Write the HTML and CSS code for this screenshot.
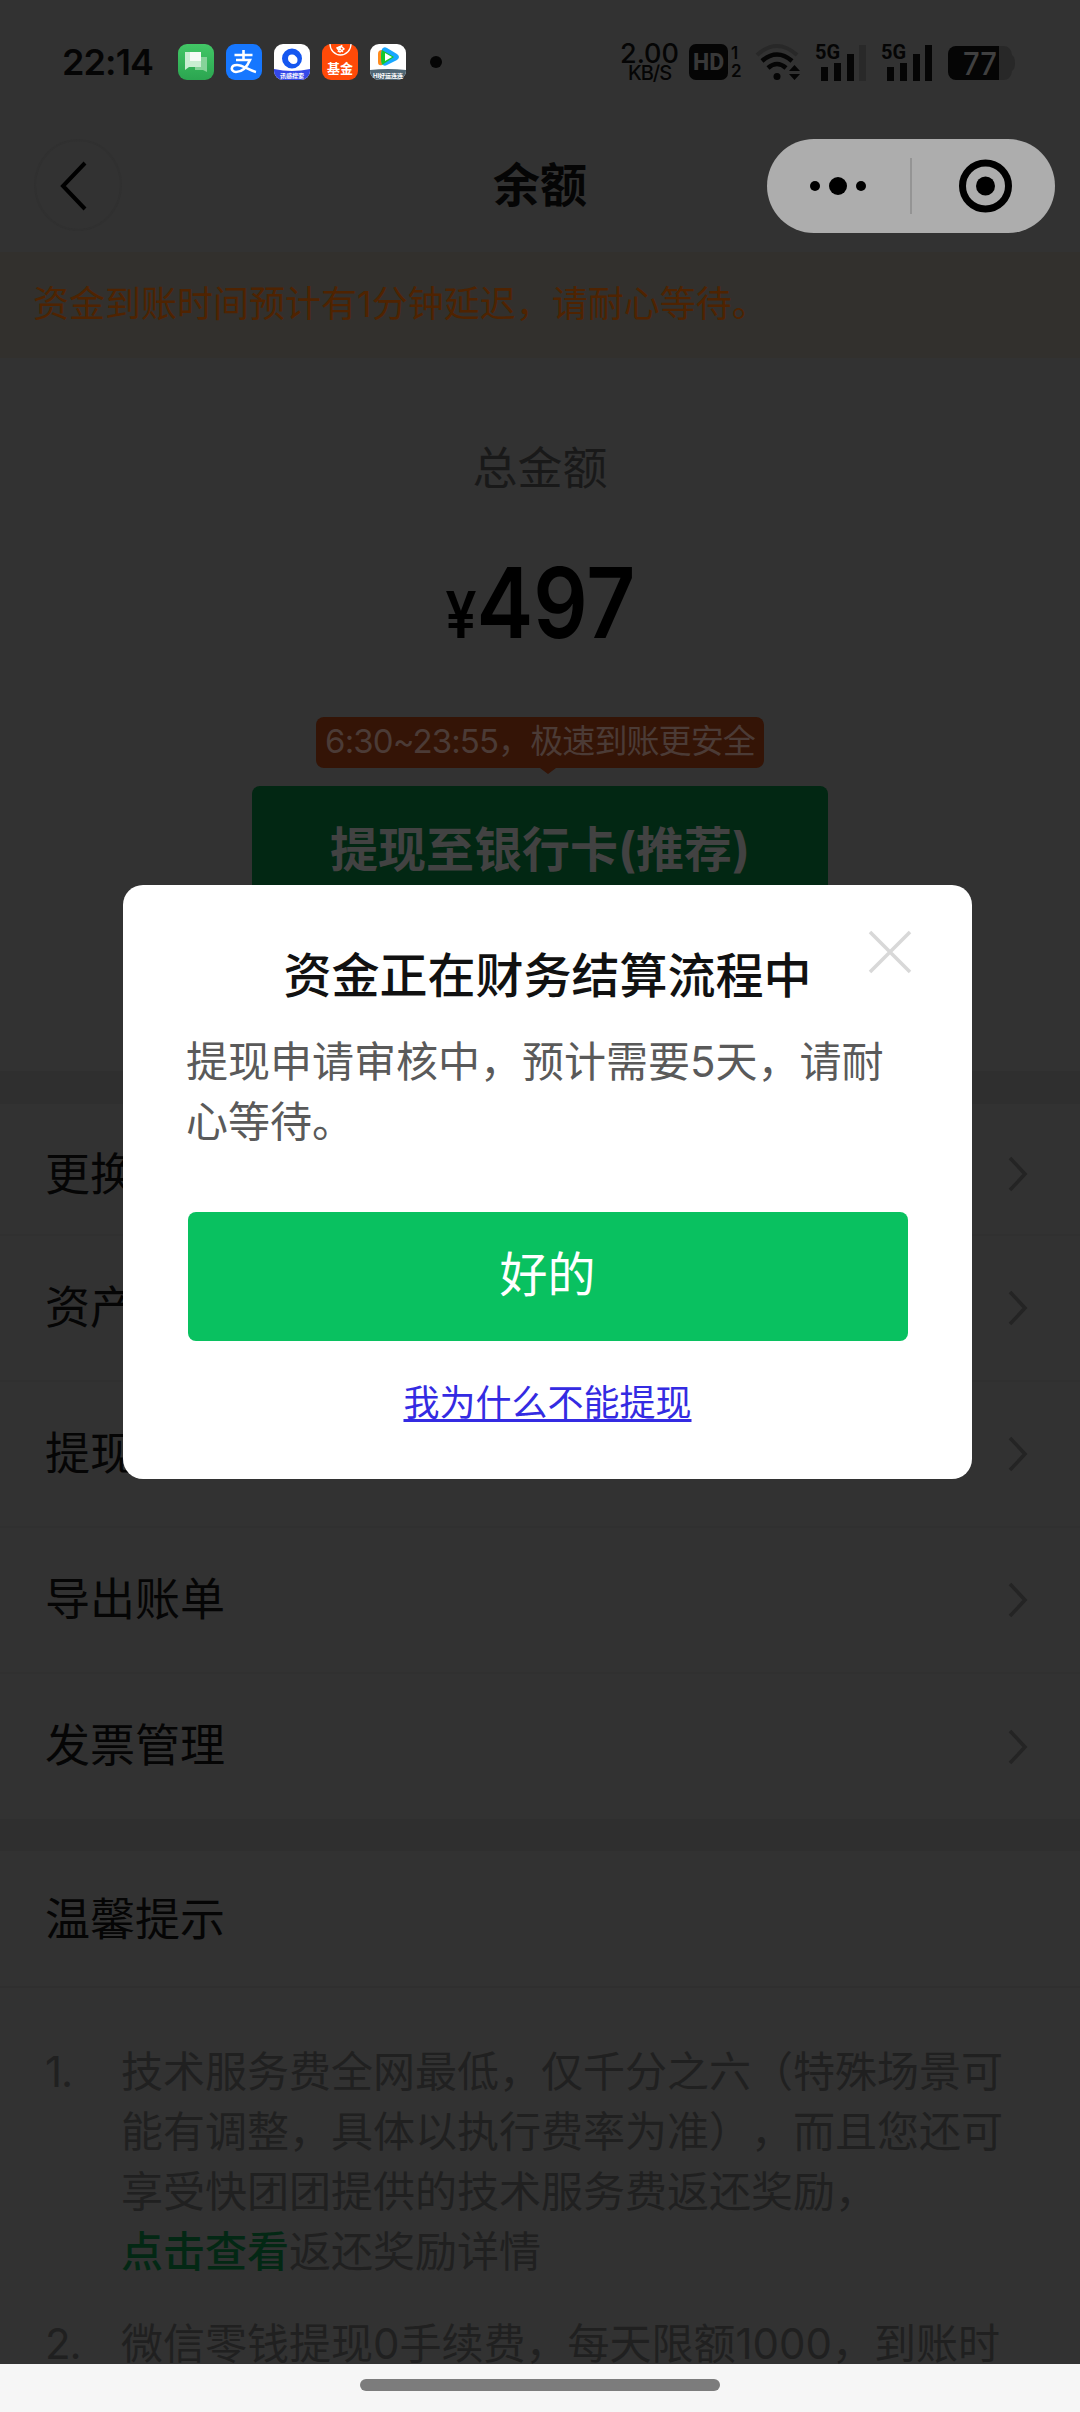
FILE: index.html
```html
<!DOCTYPE html>
<html lang="zh-CN">
<head>
<meta charset="utf-8">
<title>余额</title>
<link rel="stylesheet" href="styles.css">
</head>
<body>
<div class="screen">
  <header class="status">
    <span class="time">22:14</span>
    <div class="apps">
      <svg width="36" height="36" viewBox="0 0 36 36"><defs><linearGradient id="chat" x2="0" y2="1"><stop stop-color="#42c766"/><stop offset="1" stop-color="#2ba550"/></linearGradient></defs><rect width="36" height="36" rx="9" fill="url(#chat)"/><path d="M17 13h12v15l-4-2h-8z" fill="#86d39a"/><path d="M7 8h16v15H11l-4 3z" fill="#c9eed2"/><path d="M12 8h11v9H12z" fill="#f4fbf5"/></svg>
      <svg width="36" height="36" viewBox="0 0 36 36"><rect width="36" height="36" rx="9" fill="#1677ff"/><path d="M8.500 11h18M17.500 6v10M10 16h14c-3 7-8 12-14 12-6-.5-5.500-7 1-7 6 0 11 5 19 7" fill="none" stroke="#fff" stroke-width="2.600"/></svg>
      <svg width="36" height="36" viewBox="0 0 36 36"><rect width="36" height="36" rx="9" fill="#fff"/><path d="M0 25q18 4 36 0v2a9 9 0 0 1-9 9H9a9 9 0 0 1-9-9z" fill="#3448e8"/><circle cx="18" cy="14.500" r="7" fill="none" stroke="#1557f0" stroke-width="6"/><circle cx="19.500" cy="16" r="4" fill="#fff"/><text x="18" y="33.500" class="micro">讯感搜索</text></svg>
      <svg width="36" height="36" viewBox="0 0 36 36"><rect width="36" height="36" rx="9" fill="#ff4a08"/><path d="M8 0a10.500 11 0 0 0 21 0" fill="none" stroke="#fff" stroke-width="1.300"/><path d="M15 4l4-2 3 3-4 3zM16 3l5 5M20 1l-4 7" fill="none" stroke="#fff" stroke-width="1.400"/><text x="18" y="28.500" class="fund">基金</text></svg>
      <svg width="36" height="36" viewBox="0 0 36 36"><rect width="36" height="36" rx="9" fill="#fff"/><path d="M12 6q-4 0-4 4v8q0 4 4 3" fill="#ff8a1c"/><path d="M12 5q2-3 5-1l10 6q4 3 0 6l-10 5q-3 2-5-1-2-8 0-15z" fill="#18a7ff"/><path d="M12 6l12 7-12 8q-2-8 0-15z" fill="#14c928"/><path d="M15 9l7 4-7 4z" fill="#fff"/><path d="M0 26q18-2 36 0v1a9 9 0 0 1-9 9H9a9 9 0 0 1-9-9z" fill="#506775"/><text x="18" y="33.500" class="micro">HI好运连连</text></svg>
      <i class="more-dot"></i>
    </div>
    <div class="indicators">
      <div class="speed"><b>2.00</b><span>KB/S</span></div>
      <div class="hd">HD</div>
      <div class="sims"><span>1</span><span>2</span></div>
      <svg class="wifi" width="48" height="36" viewBox="0 0 48 36"><path d="M2 11q20-18 40 0" fill="none" stroke="#282828" stroke-width="4"/><g fill="none" stroke="#050505" stroke-width="4.500"><path d="M7 17q15-13 30 0"/><path d="M13 24q9-8 18 0"/></g><circle cx="22" cy="32.500" r="3.500" fill="#050505"/><path d="M34 27l5.500-6 5.500 6zM34 30h11l-5.500 6z" fill="#050505"/></svg>
      <svg class="signal" width="53" height="38" viewBox="0 0 53 38"><text x="0" y="16" class="five">5G</text><path d="M6 24h7v14H6zM19 20h7v18h-7zM32 11h7v27h-7z" fill="#050505"/><path d="M44 2h7v36h-7z" fill="#292929"/></svg>
      <svg class="signal second" width="53" height="38" viewBox="0 0 53 38"><text x="0" y="16" class="five">5G</text><path d="M6 24h7v14H6zM19 20h7v18h-7zM32 11h7v27h-7zM44 2h7v36h-7z" fill="#050505"/></svg>
      <svg class="battery" width="66" height="34" viewBox="0 0 66 34"><path d="M8 0h43v34H8a8 8 0 0 1-8-8V8a8 8 0 0 1 8-8z" fill="#050505"/><path d="M51 0h4q8 0 9 9 3 2 3 8t-3 8q-1 9-9 9h-4z" fill="#282828"/><text x="15" y="28.500" textLength="34" lengthAdjust="spacingAndGlyphs" class="charge">77</text></svg>
    </div>
  </header>
  <nav class="nav">
    <div class="back"><svg width="88" height="92" viewBox="0 0 88 92"><path d="M51 24L29 47l22 23" fill="none" stroke="#000" stroke-width="4"/></svg></div>
    <h1>余额</h1>
    <div class="capsule"><svg width="288" height="94" viewBox="0 0 288 94"><circle cx="48" cy="47" r="5"/><circle cx="71" cy="47" r="9"/><circle cx="94" cy="47" r="5"/><path d="M143 19h2v56h-2z" fill="#949494"/><circle cx="218.500" cy="47" r="23" fill="none" stroke="#000" stroke-width="7"/><circle cx="218.500" cy="47" r="9.500"/></svg></div>
  </nav>
  <p class="notice">资金到账时间预计有1分钟延迟，请耐心等待。</p>
  <section class="balance">
    <div class="label">总金额</div>
    <div class="amount"><span class="yen">¥</span><span>497</span></div>
    <div class="tip">6:30~23:55，极速到账更安全</div>
    <div class="withdraw">提现至银行卡(推荐)</div>
  </section>
  <section class="menu">
    <div class="row short"><span>更换银行卡</span><svg width="20" height="36" viewBox="0 0 20 36"><path d="M2 2l15 16L2 34"/></svg></div>
    <div class="row"><span>资产明细</span><svg width="20" height="36" viewBox="0 0 20 36"><path d="M2 2l15 16L2 34"/></svg></div>
    <div class="row"><span>提现记录</span><svg width="20" height="36" viewBox="0 0 20 36"><path d="M2 2l15 16L2 34"/></svg></div>
    <div class="row"><span>导出账单</span><svg width="20" height="36" viewBox="0 0 20 36"><path d="M2 2l15 16L2 34"/></svg></div>
    <div class="row"><span>发票管理</span><svg width="20" height="36" viewBox="0 0 20 36"><path d="M2 2l15 16L2 34"/></svg></div>
  </section>
  <section class="hints">
    <h2>温馨提示</h2>
    <div class="hint"><span>1.</span><p>技术服务费全网最低，仅千分之六（特殊场景可<br>能有调整，具体以执行费率为准），而且您还可<br>享受快团团提供的技术服务费返还奖励，<br><a>点击查看</a>返还奖励详情</p></div>
    <div class="hint"><span>2.</span><p>微信零钱提现0手续费，每天限额1000，到账时</p></div>
  </section>
  <footer class="home"><i></i></footer>
  <div class="dialog">
    <svg class="close" width="44" height="44" viewBox="0 0 44 44"><path d="M2 2l40 40M42 2L2 42" stroke="#d8d8d8" stroke-width="3.500"/></svg>
    <h3>资金正在财务结算流程中</h3>
    <p>提现申请审核中，预计需要5天，请耐<br>心等待。</p>
    <div class="ok">好的</div>
    <a class="why">我为什么不能提现</a>
  </div>
</div>
</body>
</html>
```
FILE: styles.css
```css
* { box-sizing: border-box; margin: 0; padding: 0; }
body { background: #323232; font-family: Inter, "Noto Sans CJK SC", sans-serif; color: #050505; text-spacing-trim: space-all; }
svg { display: block; flex: none; overflow: visible; }
i { display: block; }
.screen { position: relative; width: 1080px; height: 2412px; overflow: hidden; display: flex; flex-direction: column; background: #323232; }
.screen > * { flex: none; }

.status { height: 124px; display: flex; align-items: center; padding-left: 62px; }
.time { width: 116px; font-size: 36px; font-weight: 600; line-height: 40px; letter-spacing: -0.9px; }
.apps { display: flex; align-items: center; gap: 12px; }
.micro { font-size: 6px; font-weight: 700; fill: #fff; text-anchor: middle; }
.fund { font-size: 13px; font-weight: 700; fill: #fff; text-anchor: middle; }
.more-dot { width: 12px; height: 12px; border-radius: 50%; background: #050505; margin-left: 12px; }
.indicators { display: flex; align-items: center; margin-left: 178px; }
.speed { width: 59px; display: flex; flex-direction: column; align-items: center; }
.speed b { font-size: 27px; line-height: 22px; font-weight: 500; }
.speed span { font-size: 20px; line-height: 16px; font-weight: 500; letter-spacing: -1px; }
.hd { width: 39px; height: 36px; margin-left: 10px; border-radius: 7px; background: #050505; color: #383838; font: 800 23px/37px Roboto, sans-serif; text-align: center; }
.sims { display: flex; flex-direction: column; width: 15px; margin-left: 3px; font-size: 17px; line-height: 18px; font-weight: 600; }
.wifi { margin-left: 9px; }
.signal { margin-left: 12px; }
.second { margin-left: 13px; }
.five { font: 700 20px Roboto, sans-serif; fill: #050505; }
.battery { margin: 2px 0 0 14px; }
.charge { font-size: 31px; font-weight: 500; fill: #404040; }

.nav { height: 128px; padding: 15px 25px 0 34px; display: grid; grid-template-columns: 1fr auto 1fr; align-items: start; }
.back { width: 88px; height: 92px; border-radius: 50%; box-shadow: inset 0 0 0 2px #303030; }
.nav h1 { font-size: 47px; line-height: 92px; font-weight: 700; padding-right: 9px; }
.capsule { justify-self: end; width: 288px; height: 94px; border-radius: 47px; background: #adadad; }

.notice { height: 106px; padding-left: 33px; background: #32302d; color: #4f2301; font-size: 36px; line-height: 104px; }

.balance { height: 713px; display: flex; flex-direction: column; align-items: center; }
.label { margin-top: 81px; font-size: 45px; line-height: 60px; color: #191919; }
.amount { height: 100px; margin-top: 54px; display: flex; align-items: baseline; font-size: 98px; line-height: 100px; font-weight: 600; transform: scaleX(.87); color: #000; }
.yen { font-size: 64px; }
.tip { position: relative; width: 448px; height: 51px; margin-top: 64px; border-radius: 8px; background: #341406; color: #4b3b36; font-size: 33px; line-height: 48px; letter-spacing: -0.9px; text-align: center; white-space: nowrap; }
.tip::after { content: ""; position: absolute; left: 224px; top: 51px; border: 8px solid transparent; border-top: 6px solid #341406; border-bottom: 0; }
.withdraw { width: 576px; height: 132px; margin-top: 18px; border-radius: 8px; background: #022713; color: #424242; font-size: 48px; line-height: 128px; font-weight: 700; text-align: center; }

.menu { border-top: 33px solid #2f2f2f; border-bottom: 32px solid #2f2f2f; }
.row { height: 146px; display: flex; align-items: center; justify-content: space-between; padding: 0 52px 0 45px; font-size: 45px; border-bottom: 2px solid #303030; }
.row span { padding-bottom: 8px; }
.row.short { height: 132px; padding-top: 10px; }
.row.short span { padding-bottom: 5px; }
.row:last-child { border-bottom: 0; height: 145px; }
.row path { fill: none; stroke: #242424; stroke-width: 3.500; }

.hints h2 { height: 137px; padding-left: 45px; font-size: 45px; line-height: 138px; font-weight: 400; border-bottom: 2px solid #2f2f2f; margin-bottom: 54px; }
.hint { display: flex; padding-left: 45px; margin-bottom: 32px; font-size: 42px; line-height: 60px; color: #202020; white-space: nowrap; }
.hint span { width: 76px; letter-spacing: -1px; }
.hint a { color: #032814; font-weight: 500; }

.home { position: absolute; left: 0; bottom: 0; width: 1080px; height: 48px; background: #f6f6f6; padding-top: 15px; }
.home i { width: 360px; height: 12px; border-radius: 6px; background: #7c7c7c; margin: 0 auto; }

.dialog { position: absolute; left: 123px; top: 885px; width: 849px; height: 594px; padding: 61px 64px 0; border-radius: 20px; background: #fff; display: flex; flex-direction: column; align-items: center; }
.close { position: absolute; right: 60px; top: 45px; }
.dialog h3 { font-size: 48px; line-height: 60px; font-weight: 500; color: #111; white-space: nowrap; }
.dialog p { align-self: stretch; margin: 26px 0 0 -1px; font-size: 42px; line-height: 60px; color: #5a5a5a; white-space: nowrap; }
.ok { width: 720px; height: 129px; margin-top: 60px; border-radius: 8px; background: #09c160; color: #fff; font-size: 48px; line-height: 126px; text-align: center; }
.why { margin-top: 36px; font-size: 36px; line-height: 52px; color: #342be2; text-decoration: underline; text-decoration-thickness: 3px; text-underline-offset: 3px; }
```
